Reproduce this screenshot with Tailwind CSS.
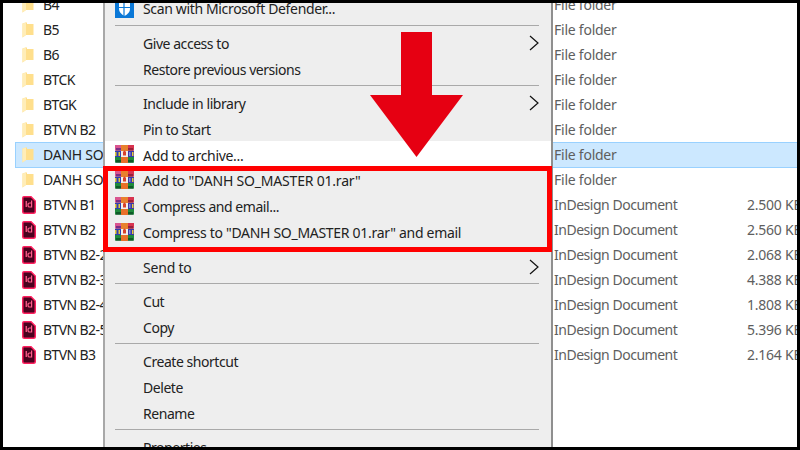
<!DOCTYPE html>
<html><head><meta charset="utf-8"><script src="https://cdn.jsdelivr.net/npm/@tailwindcss/browser@4"></script></head>
<body class="m-0 bg-black">
<svg width="0" height="0" class="absolute">
<symbol id="folder" viewBox="0 0 12 16"><path d="M0.5 1.5 L3.5 0.5 L5 0.5 L5 2 L11.5 2 L11.5 13 L4 13 L0.5 15.5 Z" fill="#ffdf8c"/><path d="M0.5 1.5 L4 0.5 L4 13 L0.5 15.5 Z" fill="#ffedb8"/></symbol>
<symbol id="id" viewBox="0 0 14 18"><path d="M2 0.75 H9 L13.25 5 V15.5 Q13.25 17.25 11.5 17.25 H2.5 Q0.75 17.25 0.75 15.5 V2 Q0.75 0.75 2 0.75 Z" fill="#49021f" stroke="#ff1f5f" stroke-width="1.5"/><rect x="3.6" y="5" width="1.3" height="6" fill="#ff5c8a"/><path d="M9.6 4.6 V11 H7.8 Q6 11 6 8.9 Q6 7 7.8 7 H9.6" fill="none" stroke="#ff5c8a" stroke-width="1.2"/></symbol>
<symbol id="rar" viewBox="0 0 19 18"><rect x="0" y="0" width="19" height="18" fill="#b9b9b9"/><rect x="0" y="0" width="6" height="5.5" fill="#d9558f"/><rect x="1" y="3" width="5" height="2.5" fill="#7b2d86"/><rect x="6" y="0" width="7" height="6" fill="#e8802e"/><rect x="13" y="0" width="6" height="5.5" fill="#d8334f"/><rect x="13" y="3" width="5" height="2.5" fill="#98213a"/><rect x="0" y="6" width="6" height="6" fill="#2f3fb0"/><rect x="0" y="7" width="1.5" height="4" fill="#e6c93a"/><rect x="3.5" y="7" width="1.5" height="4" fill="#e6c93a"/><rect x="6" y="6" width="7" height="6" fill="#f2f0ea"/><rect x="13" y="6" width="6" height="6" fill="#3a37a8"/><rect x="14" y="7" width="1.5" height="4" fill="#8088d8"/><rect x="17" y="7" width="1.5" height="4" fill="#e6c93a"/><rect x="0" y="12" width="6" height="5.5" fill="#1f8a3c"/><rect x="1" y="15" width="5" height="2.5" fill="#0f5a28"/><rect x="6" y="12" width="7" height="6" fill="#e8702a"/><rect x="13" y="12" width="6" height="5.5" fill="#1f8a3c"/><rect x="13" y="15" width="5" height="2.5" fill="#0f5a28"/><path d="M8 10.5 V7 Q9.5 4 11 7 V10.5 Z" fill="#d8402e"/></symbol>
<symbol id="chev" viewBox="0 0 10 16"><path d="M1 1 L9 8 L1 15" fill="none" stroke="#111" stroke-width="1.2"/></symbol>
</svg>
<div class="relative w-[800px] h-[450px] overflow-hidden bg-white text-[14px] font-['Noto_Sans',sans-serif] tracking-[-0.24px] whitespace-nowrap">
  <div class="-mt-[8px] pl-[15px] text-[#5e5e5e]">
    <div class="flex items-center h-[25px] pl-[7px]"><svg class="w-[12px] h-[16px] mr-[9px] shrink-0"><use href="#folder"/></svg><span class="w-[511px] shrink-0 text-[#222] tracking-[-0.6px]">B4</span><span>File folder</span></div>
    <div class="flex items-center h-[25px] pl-[7px]"><svg class="w-[12px] h-[16px] mr-[9px] shrink-0"><use href="#folder"/></svg><span class="w-[511px] shrink-0 text-[#222] tracking-[-0.6px]">B5</span><span>File folder</span></div>
    <div class="flex items-center h-[25px] pl-[7px]"><svg class="w-[12px] h-[16px] mr-[9px] shrink-0"><use href="#folder"/></svg><span class="w-[511px] shrink-0 text-[#222] tracking-[-0.6px]">B6</span><span>File folder</span></div>
    <div class="flex items-center h-[25px] pl-[7px]"><svg class="w-[12px] h-[16px] mr-[9px] shrink-0"><use href="#folder"/></svg><span class="w-[511px] shrink-0 text-[#222] tracking-[-0.6px]">BTCK</span><span>File folder</span></div>
    <div class="flex items-center h-[25px] pl-[7px]"><svg class="w-[12px] h-[16px] mr-[9px] shrink-0"><use href="#folder"/></svg><span class="w-[511px] shrink-0 text-[#222] tracking-[-0.6px]">BTGK</span><span>File folder</span></div>
    <div class="flex items-center h-[25px] pl-[7px]"><svg class="w-[12px] h-[16px] mr-[9px] shrink-0"><use href="#folder"/></svg><span class="w-[511px] shrink-0 text-[#222] tracking-[-0.6px]">BTVN B2</span><span>File folder</span></div>
    <div class="flex items-center h-[26px] -my-[0.5px] pl-[6px] bg-[#cce8ff] border border-[#99d1ff] relative"><svg class="w-[12px] h-[16px] mr-[9px] shrink-0"><use href="#folder"/></svg><span class="w-[511px] shrink-0 text-[#222]">DANH SO_MASTER 01</span><span>File folder</span></div>
    <div class="flex items-center h-[25px] pl-[7px]"><svg class="w-[12px] h-[16px] mr-[9px] shrink-0"><use href="#folder"/></svg><span class="w-[511px] shrink-0 text-[#222]">DANH SO_MASTER</span><span>File folder</span></div>
    <div class="flex items-center h-[25px] pl-[7px]"><svg class="w-[14px] h-[18px] mr-[7px] shrink-0"><use href="#id"/></svg><span class="w-[511px] shrink-0 text-[#222] tracking-[-0.6px]">BTVN B1</span><span class="w-[193px] shrink-0 tracking-[-0.48px]">InDesign Document</span><span>2.500 KB</span></div>
    <div class="flex items-center h-[25px] pl-[7px]"><svg class="w-[14px] h-[18px] mr-[7px] shrink-0"><use href="#id"/></svg><span class="w-[511px] shrink-0 text-[#222] tracking-[-0.6px]">BTVN B2</span><span class="w-[193px] shrink-0 tracking-[-0.48px]">InDesign Document</span><span>2.560 KB</span></div>
    <div class="flex items-center h-[25px] pl-[7px]"><svg class="w-[14px] h-[18px] mr-[7px] shrink-0"><use href="#id"/></svg><span class="w-[511px] shrink-0 text-[#222] tracking-[-0.6px]">BTVN B2-2</span><span class="w-[193px] shrink-0 tracking-[-0.48px]">InDesign Document</span><span>2.068 KB</span></div>
    <div class="flex items-center h-[25px] pl-[7px]"><svg class="w-[14px] h-[18px] mr-[7px] shrink-0"><use href="#id"/></svg><span class="w-[511px] shrink-0 text-[#222] tracking-[-0.6px]">BTVN B2-3</span><span class="w-[193px] shrink-0 tracking-[-0.48px]">InDesign Document</span><span>4.388 KB</span></div>
    <div class="flex items-center h-[25px] pl-[7px]"><svg class="w-[14px] h-[18px] mr-[7px] shrink-0"><use href="#id"/></svg><span class="w-[511px] shrink-0 text-[#222] tracking-[-0.6px]">BTVN B2-4</span><span class="w-[193px] shrink-0 tracking-[-0.48px]">InDesign Document</span><span>1.808 KB</span></div>
    <div class="flex items-center h-[25px] pl-[7px]"><svg class="w-[14px] h-[18px] mr-[7px] shrink-0"><use href="#id"/></svg><span class="w-[511px] shrink-0 text-[#222] tracking-[-0.6px]">BTVN B2-5</span><span class="w-[193px] shrink-0 tracking-[-0.48px]">InDesign Document</span><span>5.396 KB</span></div>
    <div class="flex items-center h-[25px] pl-[7px]"><svg class="w-[14px] h-[18px] mr-[7px] shrink-0"><use href="#id"/></svg><span class="w-[511px] shrink-0 text-[#222] tracking-[-0.6px]">BTVN B3</span><span class="w-[193px] shrink-0 tracking-[-0.48px]">InDesign Document</span><span>2.164 KB</span></div>
  </div>

  <div class="absolute left-[103px] top-[-5px] w-[450px] bg-[#eeeeee] border-l-2 border-r-2 border-l-[#a8a8a8] border-r-[#8f8f8f] pl-[10px] text-[#222] leading-none tracking-[-0.45px]">
    <div class="flex items-center h-[26px] pt-[1px]"><svg class="w-[19px] h-[19px] mr-[9px] -mt-[1px]" viewBox="0 0 19 19"><rect width="19" height="19" fill="#0a78d7"/><path d="M4 3 H15 V10 Q15 14 9.5 17 Q4 14 4 10 Z" fill="#fff"/><path d="M9 3 V17 M4 8.5 H15" stroke="#0a78d7" stroke-width="1.2"/></svg><span class="tracking-[-0.35px]">Scan with Microsoft Defender...</span></div>
    <div class="h-[8px] mr-[12px] flex items-center"><div class="h-[1px] w-full bg-[#a9a9a9]"></div></div>
    <div class="flex items-center h-[26px] pt-[3px] pl-[28px] pr-[12px] justify-between">Give access to<svg class="w-[10px] h-[16px] -mt-[2px]"><use href="#chev"/></svg></div>
    <div class="flex items-center h-[26px] pt-[3px] pl-[28px]">Restore previous versions</div>
    <div class="h-[8px] mr-[12px] flex items-center"><div class="h-[1px] w-full bg-[#a9a9a9]"></div></div>
    <div class="flex items-center h-[26px] pt-[3px] pl-[28px] pr-[12px] justify-between">Include in library<svg class="w-[10px] h-[16px] -mt-[2px]"><use href="#chev"/></svg></div>
    <div class="flex items-center h-[26px] pt-[3px] pl-[28px]">Pin to Start</div>
    <div class="flex items-center h-[26px] pt-[3px] bg-white -ml-[10px] pl-[10px]"><svg class="w-[19px] h-[18px] mr-[9px] -mt-[3px]"><use href="#rar"/></svg><span class="tracking-[-0.3px]">Add to archive...</span></div>
    <div class="flex items-center h-[26px] pt-[1px]"><svg class="w-[19px] h-[18px] mr-[9px] -mt-[1px]"><use href="#rar"/></svg><span class="tracking-[-0.2px]">Add to "DANH SO_MASTER 01.rar"</span></div>
    <div class="flex items-center h-[26px] pt-[1px]"><svg class="w-[19px] h-[18px] mr-[9px] -mt-[1px]"><use href="#rar"/></svg>Compress and email...</div>
    <div class="flex items-center h-[26px] pt-[1px]"><svg class="w-[19px] h-[18px] mr-[9px] -mt-[1px]"><use href="#rar"/></svg><span class="tracking-[-0.3px]">Compress to "DANH SO_MASTER 01.rar" and email</span></div>
    <div class="h-[8px]"></div>
    <div class="flex items-center h-[26px] pt-[3px] pl-[28px] pr-[12px] justify-between"><span class="tracking-[-0.2px]">Send to</span><svg class="w-[10px] h-[16px] -mt-[2px]"><use href="#chev"/></svg></div>
    <div class="h-[8px] mr-[12px] flex items-center"><div class="h-[1px] w-full bg-[#a9a9a9]"></div></div>
    <div class="flex items-center h-[26px] pt-[3px] pl-[28px]">Cut</div>
    <div class="flex items-center h-[26px] pt-[3px] pl-[28px]">Copy</div>
    <div class="h-[8px] mr-[12px] flex items-center"><div class="h-[1px] w-full bg-[#a9a9a9]"></div></div>
    <div class="flex items-center h-[26px] pt-[3px] pl-[28px]">Create shortcut</div>
    <div class="flex items-center h-[26px] pt-[3px] pl-[28px]">Delete</div>
    <div class="flex items-center h-[26px] pt-[3px] pl-[28px]">Rename</div>
    <div class="h-[8px] mr-[12px] flex items-center"><div class="h-[1px] w-full bg-[#a9a9a9]"></div></div>
    <div class="flex items-center h-[26px] pt-[3px] pl-[28px]">Properties</div>
  </div>

  <div class="absolute left-[103px] top-[166px] w-[449px] h-[86px] border-[5px] border-[#ff0000]"></div>
  <svg class="absolute left-[370px] top-[32px]" width="93" height="125" viewBox="0 0 93 125"><path d="M31 0 H62 V63 H93 L46.5 125 L0 63 H31 Z" fill="#e60012"/></svg>
  <div class="absolute inset-0 border-[3px] border-black pointer-events-none"></div>
</div>
</body></html>
